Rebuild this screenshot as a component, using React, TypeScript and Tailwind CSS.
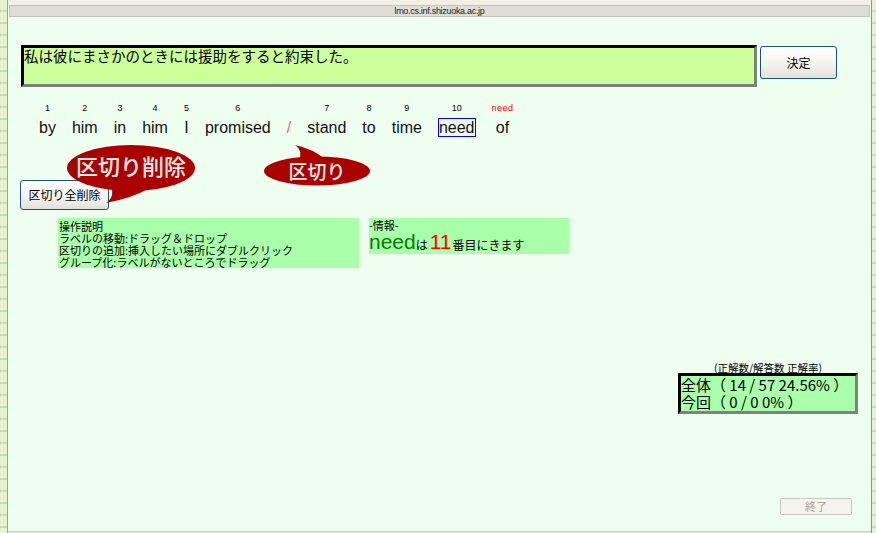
const jp = "font-['Noto_Sans_CJK_JP','Noto_Sans',sans-serif]";

const words: { n: string; w: string; sep?: boolean; box?: boolean; red?: boolean }[] = [
  { n: '1', w: 'by' },
  { n: '2', w: 'him' },
  { n: '3', w: 'in' },
  { n: '4', w: 'him' },
  { n: '5', w: 'I' },
  { n: '6', w: 'promised' },
  { n: '', w: '/', sep: true },
  { n: '7', w: 'stand' },
  { n: '8', w: 'to' },
  { n: '9', w: 'time' },
  { n: '10', w: 'need', box: true },
  { n: 'need', w: 'of', red: true },
];

function Strip({ className }: { className: string }) {
  return (
    <div
      className={`h-full bg-[repeating-linear-gradient(180deg,#e6f2d2_0px,#e6f2d2_10px,#c6e2b4_10px,#c6e2b4_12px)] ${className}`}
    />
  );
}

export default function App() {
  return (
    <div className="w-[876px] h-[533px] flex overflow-hidden bg-[#efffef] font-['Liberation_Sans',Arial,sans-serif]">
      <Strip className="w-[8px] border-r border-[#9aa890] shrink-0" />

      <div className="flex-1 flex flex-col">
        {/* browser chrome */}
        <div className="h-[5px] bg-[#f2efe4]" />
        <div className="h-[12px] mx-[1px] bg-[#deddd6] border border-[#c4c3bb] flex items-center justify-center text-[9px] leading-none text-[#222] tracking-[-0.3px]">
          lmo.cs.inf.shizuoka.ac.jp
        </div>

        {/* page */}
        <div className="relative flex-1 flex flex-col border-b border-[#c8d0c0]">
          {/* answer input */}
          <div className="flex items-start gap-[3px] mt-[28px] pl-[13px]">
            <div
              className={`w-[736px] h-[42px] bg-[#ccff99] border-t-[3px] border-l-[3px] border-black border-r-[3px] border-b-[3px] border-r-[#808080] border-b-[#808080] text-[14.5px] leading-[16px] text-black ${jp}`}
            >
              私は彼にまさかのときには援助をすると約束した。
            </div>
            <button
              className={`w-[77px] h-[33px] mt-[1px] rounded-[3px] border border-[#1c5180] bg-[linear-gradient(180deg,#ffffff,#f2f2ec_60%,#e2e1da)] text-[12px] text-black ${jp}`}
            >
              決定
            </button>
          </div>

          {/* word labels */}
          <div className="flex items-start gap-[16px] mt-[15px] pl-[31px]">
            {words.map((it, i) => (
              <div key={i} className="flex flex-col items-center">
                <div
                  className={`h-[12px] text-[9px] leading-[12px] ${
                    it.red ? 'text-[#ff0000] tracking-[0.5px]' : 'text-black'
                  }`}
                >
                  {it.n}
                </div>
                <div
                  className={`mt-[4px] text-[16px] h-[19px] ${
                    it.sep ? 'text-[#f0628a] text-[15px]' : 'text-[#111]'
                  } ${it.box ? 'border border-[#0000ff] leading-[18px]' : 'leading-[20px]'}`}
                >
                  {it.w}
                </div>
              </div>
            ))}
          </div>

          {/* clear separators */}
          <div className="mt-[43px] pl-[12px]">
            <button
              className={`w-[89px] h-[30px] rounded-[3px] border border-[#1c5180] bg-[linear-gradient(180deg,#ffffff,#f2f2ec_60%,#e2e1da)] text-[12px] text-black ${jp}`}
            >
              区切り全削除
            </button>
          </div>

          {/* help + info */}
          <div className="flex items-start gap-[10px] mt-[8px] pl-[50px]">
            <div
              className={`w-[301px] h-[50px] bg-[#aaffaa] pt-[2px] pl-[1px] text-[11px] leading-[12px] text-black ${jp}`}
            >
              <div>操作説明</div>
              <div>ラベルの移動:ドラッグ＆ドロップ</div>
              <div>区切りの追加:挿入したい場所にダブルクリック</div>
              <div>グループ化:ラベルがないところでドラッグ</div>
            </div>
            <div className={`w-[200px] h-[36px] bg-[#aaffaa] pt-[1px] text-black ${jp}`}>
              <div className="text-[11px] leading-[12px]">-情報-</div>
              <div className="flex items-end h-[21px] leading-none">
                <span className="text-[21px] text-[#008000] font-['Liberation_Sans',sans-serif] leading-[20px]">need</span>
                <span className="text-[12px] mb-[1px]">は</span>
                <span className="text-[21px] text-[#ff0000] font-['Liberation_Sans',sans-serif] leading-[20px] ml-[2px]">11</span>
                <span className="text-[12px] mb-[1px] ml-[1px]">番目にきます</span>
              </div>
            </div>
          </div>

          {/* score */}
          <div className="flex flex-col items-end mt-[94px] pr-[13px]">
            <div className={`w-[180px] text-center text-[10.5px] leading-[11px] text-black ${jp}`}>
              (正解数/解答数 正解率)
            </div>
            <div
              className={`w-[180px] h-[41px] bg-[#aaffaa] border-t-[3px] border-l-[3px] border-black border-r-[3px] border-b-[3px] border-r-[#808080] border-b-[#808080] text-[15px] leading-[17px] text-black ${jp}`}
            >
              <div>全体（ 14 / 57 24.56% ）</div>
              <div>今回（ 0 / 0 0% ）</div>
            </div>
          </div>

          <div className="flex justify-end mt-[84px] pr-[19px]">
            <button
              disabled
              className={`w-[72px] h-[17px] rounded-[2px] border border-[#c9c9c0] bg-[#f4f4ec] text-[11px] leading-none text-[#a5a5a0] ${jp}`}
            >
              終了
            </button>
          </div>

          {/* speech bubbles */}
          <div className="absolute left-[58px] top-[127px] w-[132px] h-[62px]">
            <svg width="132" height="62" viewBox="0 0 132 62" className="absolute inset-0">
              <path d="M44 40 Q 50 52 40 59 Q 66 54 82 45 Z" fill="#aa0000" />
              <ellipse cx="65" cy="24" rx="64" ry="23" fill="#aa0000" />
            </svg>
            <div
              className={`absolute left-0 top-[8px] w-[130px] text-center text-[22px] leading-[26px] font-medium text-[#fbeee6] ${jp}`}
            >
              区切り削除
            </div>
          </div>

          <div className="absolute left-[255px] top-[126px] w-[110px] h-[44px]">
            <svg width="110" height="44" viewBox="0 0 110 44" className="absolute inset-0">
              <path d="M36 18 Q 40 7 32 2 Q 50 6 62 16 Z" fill="#aa0000" />
              <ellipse cx="54" cy="28" rx="53" ry="14.5" fill="#aa0000" />
            </svg>
            <div
              className={`absolute left-0 top-[16px] w-[108px] text-center text-[19px] leading-[24px] font-medium text-[#fbeee6] ${jp}`}
            >
              区切り
            </div>
          </div>
        </div>
        <div className="h-[1px] bg-[#e8e8e0]" />
      </div>

      <Strip className="w-[5px] border-l border-[#8d9788] shrink-0" />
    </div>
  );
}
